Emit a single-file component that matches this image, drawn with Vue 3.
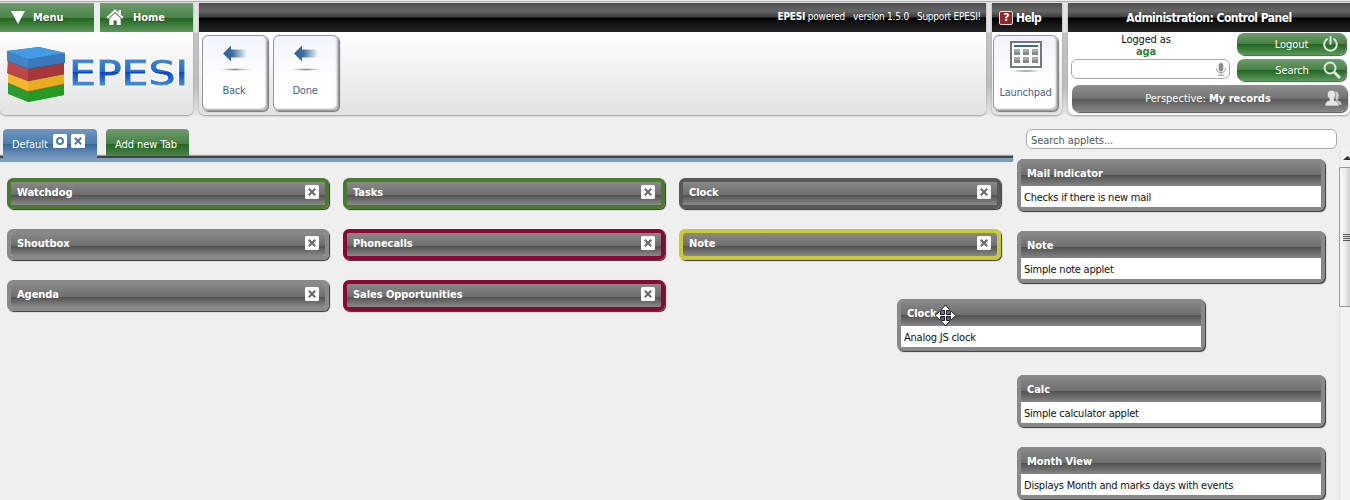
<script setup>
const columns = [
  [
    { title: 'Watchdog', tone: 'green' },
    { title: 'Shoutbox', tone: 'gray' },
    { title: 'Agenda', tone: 'gray' },
  ],
  [
    { title: 'Tasks', tone: 'green' },
    { title: 'Phonecalls', tone: 'red' },
    { title: 'Sales Opportunities', tone: 'red' },
  ],
  [
    { title: 'Clock', tone: 'dark' },
    { title: 'Note', tone: 'yellow' },
  ],
]
// null keeps the empty place of the applet that is being dragged
const applets = [
  { title: 'Mail indicator', text: 'Checks if there is new mail' },
  { title: 'Note', text: 'Simple note applet' },
  null,
  { title: 'Calc', text: 'Simple calculator applet' },
  { title: 'Month View', text: 'Displays Month and marks days with events' },
]
</script>

<template>
  <div class="page">
    <header class="top">
      <section class="panel brand">
        <nav class="menus">
          <a class="menu m1">
            <svg width="14" height="13" viewBox="0 0 14 13"><path d="M0 0H14L7 13Z" fill="#fff" /></svg>
            <b>Menu</b>
          </a>
          <a class="menu m2">
            <svg width="18" height="17" viewBox="0 0 18 17"><path d="M1 9 9 1.5 17 9" fill="none" stroke="#fff" stroke-width="1.8" /><path d="M12.5 1H15V6L12.5 3.5ZM9 4.3 14.7 9.5V16H10.7V11.5H7.5V16H3.3V9.5Z" fill="#fff" /></svg>
            <b>Home</b>
          </a>
        </nav>
        <svg class="logo" width="193" height="83" viewBox="0 32 193 83">
          <defs>
            <linearGradient id="lg" gradientUnits="userSpaceOnUse" x1="0" y1="60" x2="0" y2="85">
              <stop offset="0" stop-color="#3d86d2" /><stop offset=".48" stop-color="#1c6acb" />
              <stop offset=".5" stop-color="#0646cc" /><stop offset="1" stop-color="#3f8bdc" />
            </linearGradient>
          </defs>
          <path d="M8 80 28 86 64 79V95L28 102 8 94Z" fill="#2b9c33" /><path d="M28 86 64 79V95L28 102Z" fill="#229a25" />
          <path d="M8 70 28 76 64 69V84L28 91.500 8 83Z" fill="#f3b72d" /><path d="M28 77 64 70V84L28 91.500Z" fill="#e7ac20" />
          <path d="M8 60 28 66 64 61V74L28 81 7 73Z" fill="#bd4648" /><path d="M28 68 64 62V74L28 81Z" fill="#a8373c" />
          <path d="M7 51 39 47 65 53V63L28 69 7 61Z" fill="#3978bb" /><path d="M7 51 39 47 65 53 28 59Z" fill="#419be5" /><path d="M7 51 28 59V69L7 61Z" fill="#4384c6" />
          <path d="M8 61 28 69 64 63M8 73 28 81 64 74M8 83 28 91.500 64 84" fill="none" stroke="#553322" stroke-opacity=".3" />
          <text x="69" y="84.500" class="word" textLength="119" lengthAdjust="spacingAndGlyphs">EPESI</text>
        </svg>
      </section>

      <section class="panel actions">
        <div class="bar credits"><span><b>EPESI</b> powered</span><span>version 1.5.0</span><span>Support EPESI!</span></div>
        <div class="buttons">
          <a v-for="name in ['Back', 'Done']" :key="name" class="tile">
            <svg width="34" height="28" viewBox="0 0 34 28">
              <defs>
                <linearGradient id="ag"><stop offset="0" stop-color="#2f6298" /><stop offset=".38" stop-color="#3a6b9f" /><stop offset="1" stop-color="#f8f9fe" /></linearGradient>
                <radialGradient id="as"><stop offset="0" stop-color="#888" /><stop offset="1" stop-color="#999" stop-opacity="0" /></radialGradient>
              </defs>
              <path d="M5 8.500 13 .5V4.500H29V12.500H13V16.500Z" fill="url(#ag)" stroke="#fff" stroke-width="1" paint-order="stroke" />
              <ellipse cx="17" cy="24.500" rx="16" ry="1.500" fill="url(#as)" />
            </svg>
            <span>{{ name }}</span>
          </a>
        </div>
      </section>

      <section class="panel helpbox">
        <div class="bar help"><i>?</i><b>Help</b></div>
        <div class="buttons lone">
          <a class="tile">
            <svg width="34" height="32" viewBox="0 0 34 32">
              <rect x="2" y="1" width="30" height="25" fill="#f6fafa" stroke="#777" stroke-width="2" />
              <path d="M5 5H29" stroke="#3c6795" stroke-width="2" />
              <path v-for="x in [5, 14, 23]" :key="x" :d="`M${x} 8h6v6h-6zM${x} 16h6v6h-6z`" fill="#aaa" />
              <path v-for="x in [5, 14, 23]" :key="'s' + x" :d="`M${x} 11h6v3h-6zM${x} 19h6v3h-6z`" fill="#888" />
              <ellipse cx="17" cy="30" rx="15" ry="1.500" fill="url(#as)" />
            </svg>
            <span>Launchpad</span>
          </a>
        </div>
      </section>

      <section class="panel account">
        <div class="bar title"><b>Administration: Control Panel</b></div>
        <div class="acct">
          <div class="left">
            <div class="logged">Logged as<b>aga</b></div>
            <div class="query">
              <svg width="10" height="13" viewBox="0 0 10 13"><rect x="2.700" y="0" width="4.600" height="8.500" rx="2.300" fill="#8b8b8b" /><path d="M.8 5V6.500Q.8 9.500 5 9.500T9.200 6.500V5M5 9.500V12M2 12.200H8" fill="none" stroke="#999" /></svg>
            </div>
          </div>
          <div class="right">
            <a class="gbtn"><span>Logout</span>
              <svg width="17" height="17" viewBox="0 0 17 17"><path d="M5 3.200A6.300 6.300 0 1 0 12 3.200M8.500 1V8" fill="none" stroke="#dfe6df" stroke-width="2" stroke-linecap="round" /></svg>
            </a>
            <a class="gbtn search"><span>Search</span>
              <svg width="18" height="18" viewBox="0 0 18 18"><circle cx="7" cy="7" r="5.500" fill="none" stroke="#e2e8e2" stroke-width="2" /><path d="M11 11 17 17" stroke="#e2e8e2" stroke-width="3" /></svg>
            </a>
          </div>
        </div>
        <a class="persp"><span>Perspective: <b>My records</b></span>
          <svg width="17" height="17" viewBox="0 0 17 17"><path d="M9 1.500Q13.500 .5 14 5T12 10Q16.500 11 16.800 15H12Z" fill="#cdcdcd" stroke="#777" stroke-width=".5" /><path d="M6.500 .3Q10.800 .3 10.500 5 10.200 8 9 9V10.500Q14 11 14 16H0Q0 11 4.500 10.500V9Q2.300 7 2.300 4.500 2.800 .3 6.500 .3Z" fill="#e5e5e5" stroke="#777" stroke-width=".6" /></svg>
        </a>
      </section>
    </header>

    <main class="body">
      <div class="board">
        <div class="tabs">
          <div class="tab current"><span>Default</span>
            <svg class="sq" viewBox="0 0 14 14"><rect width="14" height="14" rx="1.500" fill="#fff" /><circle cx="7" cy="7" r="3" fill="none" stroke="#4e7cab" stroke-width="2" /></svg>
            <svg class="sq" viewBox="0 0 14 14"><rect width="14" height="14" rx="1.500" fill="#fff" /><path d="M3.800 3.800 10.200 10.200M10.200 3.800 3.800 10.200" stroke="#55779c" stroke-width="2" /></svg>
          </div>
          <div class="tab add"><span>Add new Tab</span></div>
        </div>
        <div class="rule"></div>
        <div class="cols">
          <div v-for="(col, i) in columns" :key="i" class="col">
            <div v-for="item in col" :key="item.title" class="widget" :class="item.tone">
              <b>{{ item.title }}</b>
              <svg class="sq" viewBox="0 0 14 14"><rect width="14" height="14" rx="1.500" fill="#fff" /><path d="M3.800 3.800 10.200 10.200M10.200 3.800 3.800 10.200" stroke="#666" stroke-width="2" /></svg>
            </div>
          </div>
        </div>
      </div>
      <aside class="side">
        <div class="find">Search applets...</div>
        <div class="list">
          <div class="cards">
            <template v-for="(a, i) in applets" :key="i">
              <div v-if="a" class="card"><b>{{ a.title }}</b><p>{{ a.text }}</p></div>
              <div v-else class="slot"></div>
            </template>
          </div>
          <div class="scroll">
            <svg width="11" height="20" viewBox="0 0 11 20"><path d="M4 11 8.500 7 13 11Z" fill="#333" /></svg>
            <div class="thumb"><i></i><i></i><i></i><i></i></div>
          </div>
        </div>
      </aside>
    </main>

    <div class="card drag"><b>Clock</b><p>Analog JS clock</p>
      <svg class="cursor" width="23" height="23" viewBox="0 0 23 23"><path d="M11.500 1 15.500 5.500V6.500H12.500V10.500H16.500V7.500H17.500L22 11.500 17.500 15.500H16.500V12.500H12.500V16.500H15.500V17.500L11.500 22 7.500 17.500V16.500H10.500V12.500H6.500V15.500H5.500L1 11.500 5.500 7.500H6.500V10.500H10.500V6.500H7.500V5.500Z" fill="#fff" stroke="#181828" /></svg>
    </div>
  </div>
</template>

<style>
body { background: #efefef; overflow: hidden; }
</style>

<style scoped>
* { box-sizing: border-box; }
.page { position: relative; width: 1350px; height: 500px; overflow: hidden; background: #efefef; font: 11px/14px "DejaVu Sans Condensed", "DejaVu Sans", sans-serif; font-stretch: condensed; color: #111; white-space: nowrap; letter-spacing: -.05px; }
svg { display: block; flex: none; }
.top { display: flex; gap: 6px; height: 115px; padding-top: 2px; border-top: 1px solid #eee; background: linear-gradient(#aaa 0 1px, #e4e4e4 1px 31px, #c4c4c4 32px, #bdbdbd 75%, #e8e8e8); }
.panel { height: 112px; border-radius: 0 0 6px 6px; background: linear-gradient(#fff 30px, #e2e2e2); box-shadow: 0 1px 2px #999; }
.brand { width: 193px; }
.actions { width: 787px; }
.helpbox { width: 70px; }
.account { width: 282px; background: #fff; }
.menus { display: flex; gap: 6px; height: 29px; background: #eee; }
.menu { display: flex; align-items: center; height: 29px; color: #fff; text-shadow: 1px 1px 1px #254d25; background: linear-gradient(#6d9c6b, #4b824a 15px, #216520 15px, #5c985b); }
.m1 { width: 94px; padding-left: 11px; gap: 8px; }
.m2 { width: 93px; padding-left: 6px; gap: 9px; }
.word { font-family: "DejaVu Sans", sans-serif; font-size: 33px; font-stretch: normal; letter-spacing: 0; fill: url(#lg); stroke: url(#lg); stroke-width: .8px; filter: drop-shadow(0 0 1px #fff) drop-shadow(0 0 1px #fff); }
.bar { display: flex; align-items: center; height: 29px; color: #fff; background: linear-gradient(#4c4c4c, #666 8px, #3c3c3c 14px, #000 15px, #111 20px, #252525); }
.credits { justify-content: flex-end; gap: 8px; padding: 0 5px 2px 0; font-size: 10px; letter-spacing: -.22px; }
.help { padding-left: 7px; gap: 3px; font-size: 12px; letter-spacing: -.65px; }
.help i { width: 14px; height: 14px; border: 1px solid #ddd; border-radius: 2px; background: #8f282b; font: bold 11px/12px "DejaVu Sans", sans-serif; text-align: center; }
.buttons { display: flex; gap: 5px; padding: 3px 4px 0 3px; }
.lone { padding-left: 1px; }
.tile { display: flex; flex-direction: column; align-items: center; width: 66px; height: 76px; padding-top: 9px; border: 1px solid #999; border-radius: 6px; color: #456489; letter-spacing: -.25px; background: linear-gradient(#f2f3ff, #fff 65%); box-shadow: inset -1px -1px 2px #aaa, 1px 1px 1px #777; }
.tile svg { height: auto; }
.tile span { margin: auto 2px 12px 0; }
.lone .tile { padding-top: 5px; }
.lone .tile span { margin: auto 0 10px; }
.title { justify-content: center; font-size: 12px; letter-spacing: -.53px; }
.acct { display: flex; gap: 7px; padding: 1px 3px 0; }
.left { width: 159px; }
.logged { display: flex; flex-direction: column; align-items: center; height: 26px; padding-right: 9px; line-height: 13px; letter-spacing: -.15px; }
.logged b { color: #398033; line-height: 12px; }
.query { display: flex; align-items: center; justify-content: flex-end; height: 20px; padding-right: 3px; border: 1px solid #aaa; border-radius: 6px; background: #fff; }
.right { display: flex; flex-direction: column; gap: 4px; }
.gbtn, .persp { display: flex; align-items: center; color: #fff; border-radius: 7px; box-shadow: 1px 1px 1px #555; }
.gbtn { width: 109px; height: 22px; padding-right: 7px; background: linear-gradient(#6b9d6a, #488047 11px, #216520 11px, #5c985b); }
.gbtn.search { padding-right: 5px; }
.gbtn span { flex: 1; padding: 1px 0 0 24px; text-align: center; }
.persp { width: 275px; height: 27px; margin: 4px 0 0 4px; padding-right: 5px; background: linear-gradient(#8f8f8f, #717171 14px, #595959 14px, #888); }
.persp span { flex: 1; padding-left: 19px; text-align: center; letter-spacing: 0; }
.body { display: flex; height: 385px; }
.board { width: 1013px; padding-top: 14px; }
.tabs { display: flex; gap: 9px; height: 27px; padding-left: 3px; }
.tab { display: flex; color: #fff; border-radius: 4px 4px 0 0; }
.current { width: 94px; height: 30px; padding: 5px 0 0 9px; gap: 4px; background: linear-gradient(#6f97c2, #4d7cac 15px, #33669a 15px, #7598bc 28px, #7b9cbe); z-index: 1; }
.current span { width: 37px; margin-top: 4px; }
.add { width: 83px; height: 27px; padding: 9px 0 0 9px; background: linear-gradient(#6d9c6b, #488047 15px, #216520 15px, #4d864d); }
.rule { height: 6px; border-top: 2px solid #444; background: #7b9cbe; box-shadow: 0 -1px 1px #999; }
.sq { width: 14px; height: 14px; }
.cols { display: flex; gap: 14px; padding: 16px 0 0 7px; }
.col { display: flex; flex-direction: column; gap: 20px; width: 322px; }
.widget { display: flex; align-items: flex-start; justify-content: space-between; height: 31px; padding: 3px 6px 0 6px; border: 4px solid #898989; border-radius: 6px; color: #fff; background: linear-gradient(#898989, #6d6d6d 13px, #515151 13px, #898989) padding-box; box-shadow: 1px 1px 1px #333; }
.widget b { padding-top: 1px; }
.green { border-color: #4a7930; }
.red { border-color: #8b0836; }
.yellow { border-color: #c8c83b; }
.dark { border-color: #595959; }
.side { width: 337px; padding-top: 14px; }
.find { width: 311px; height: 20px; margin-left: 13px; padding: 4px 4px; border: 1px solid #aaa; border-radius: 6px; background: #fff; color: #555; line-height: 13px; }
.list { display: flex; justify-content: space-between; height: 351px; }
.cards { display: flex; flex-direction: column; gap: 20px; padding: 10px 0 0 4px; }
.card { flex: none; width: 308px; height: 52px; padding: 0 4px 4px; border-radius: 6px; background: #898989; box-shadow: 1px 1px 1px #333; }
.card b { display: block; height: 27px; padding: 8px 0 0 6px; color: #fff; background: linear-gradient(#898989 2px, #6d6d6d 16px, #505050 16px, #858585); }
.card p { height: 21px; margin: 0; padding: 5px 3px 0; background: #fff; color: #111; letter-spacing: -.23px; }
.slot { flex: none; height: 52px; }
.scroll { width: 11px; background: linear-gradient(90deg, #e0e0e0, #f2f2f2 2px); }
.thumb { display: flex; flex-direction: column; align-items: flex-end; justify-content: center; gap: 1px; height: 140px; margin-top: -2px; border: 1px solid #999; border-right: 0; border-radius: 2px 0 0 2px; background: linear-gradient(90deg, #fafafa, #ededed 50%, #cfcfd4); }
.thumb i { width: 7px; height: 1px; background: #555; }
.drag { position: absolute; left: 897px; top: 299px; }
.cursor { position: absolute; left: 37px; top: 5px; }
</style>
